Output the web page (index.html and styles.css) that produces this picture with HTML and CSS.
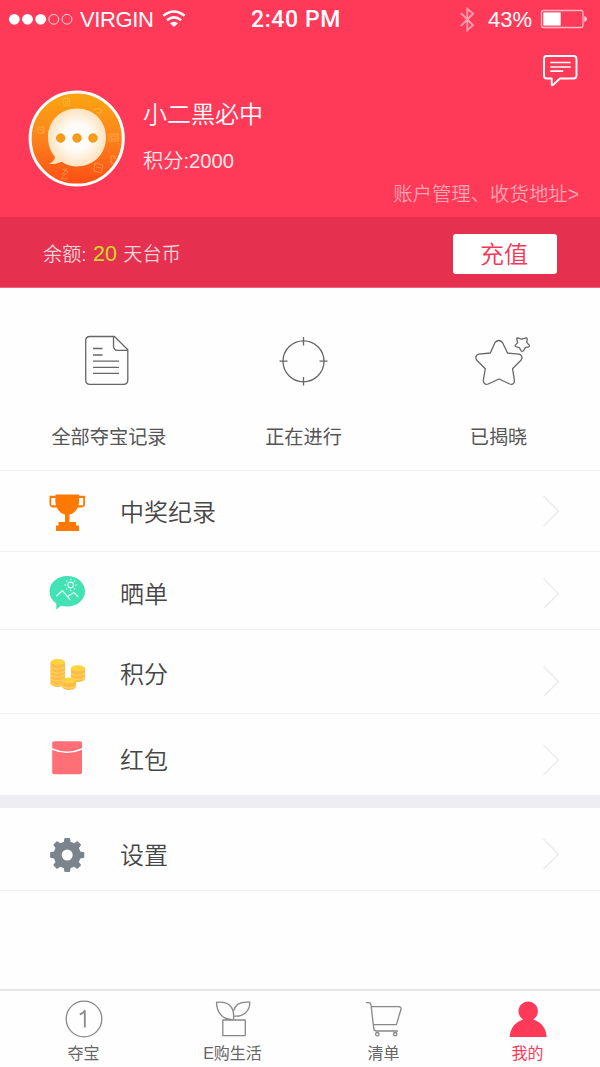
FILE: index.html
```html
<!DOCTYPE html>
<html lang="zh-CN">
<head>
<meta charset="utf-8">
<title>我的</title>
<link rel="stylesheet" href="styles.css">
</head>
<body>
<main class="app">
  <header class="hero">
    <div class="status">
      <svg class="signal" viewBox="0 0 80 40" width="80" height="40">
        <g fill="#fff"><circle cx="14.3" cy="19.3" r="5.4"/><circle cx="27.5" cy="19.3" r="5.4"/><circle cx="40.7" cy="19.3" r="5.4"/></g>
        <g fill="none" stroke="#fff" stroke-opacity=".8"><circle cx="53.8" cy="19.3" r="4.9"/><circle cx="67" cy="19.3" r="4.9"/></g>
      </svg>
      <span class="carrier">VIRGIN</span>
      <svg class="wifi" viewBox="160 0 28 40" width="28" height="40">
        <path d="M170 23.2q4-3 8 0L174 27z" fill="#fff"/>
        <g fill="none" stroke="#fff" stroke-width="2.6"><path d="M167 20.2q7-5.600 14 0"/><path d="M163.400 15.800q10.600-8.600 21.200 0"/></g>
      </svg>
      <span class="time">2:40 PM</span>
      <svg class="bluetooth" viewBox="456 0 20 40" width="20" height="40">
        <path d="M460.800 13l12.300 12.300-5.800 5V8.700l5.800 5L460.800 26" fill="none" stroke="#fff" stroke-opacity=".5" stroke-width="1.900"/>
      </svg>
      <span class="percent">43%</span>
      <svg class="battery" viewBox="538 0 52 40" width="52" height="40">
        <rect x="541.500" y="10.500" width="41.500" height="17" rx="2" fill="none" stroke="#fff" stroke-opacity=".65" stroke-width="1.300"/>
        <rect x="543.300" y="12.400" width="17.400" height="13.200" fill="#fff"/>
        <path d="M584.300 16q2.700.8 2.700 3t-2.700 3z" fill="#fff" fill-opacity=".8"/>
      </svg>
    </div>
    <div class="message-row">
      <svg viewBox="540 50 42 40" width="42" height="40" fill="none" stroke="#fff" stroke-width="1.900" stroke-linejoin="round" stroke-linecap="round">
        <path d="M546.500 56h27q3 0 3 3v16.500q0 3-3 3H560l-7 6.500q-1.300.8-1.300-1V78.500h-5.200q-2.500 0-2.500-3V59q0-3 2.500-3z"/>
        <path d="M551 62.500h19M551 67h19M551 71.200h11.500" stroke-width="1.700"/>
      </svg>
    </div>
    <div class="profile">
      <svg class="avatar" viewBox="28 90 98 98" width="98" height="98">
        <defs>
          <linearGradient id="orange" x1="0" y1="0" x2="0" y2="1"><stop offset="0" stop-color="#fba611"/><stop offset=".5" stop-color="#fd831b"/><stop offset="1" stop-color="#ff4d15"/></linearGradient>
          <radialGradient id="cream"><stop offset="0" stop-color="#fff"/><stop offset=".5" stop-color="#fffaf4"/><stop offset="1" stop-color="#fce3bd"/></radialGradient>
        </defs>
        <circle cx="76.700" cy="138.500" r="46.600" fill="url(#orange)" stroke="#fff" stroke-width="3"/>
        <g fill="none" stroke="#ffd180" stroke-opacity=".4" stroke-width="1">
          <path d="M63 99l6-1 1 7-6 1zM65 101h3M65 103h3M94 111l4-3 4 3-3 4M96 113l4-1M38 127h6v6h-6zM40 129l3 2M109 134h9v7h-9zM111 136h5v3h-5zM117 156h-6v7h4M113 158h3M95 163l8 2-2 8-7-2zM96 167l5 1M63 169l5 3-4 3-3 4h7M62 175l5-7"/>
        </g>
        <path d="M77 108.500c16.500 0 29 12 29 29s-13 29-29 29c-5.700 0-11-1.500-15.500-4.700-3.600 1.800-8 2.600-12.500 2.200 3.200-1.200 5.400-4 6-7-4.400-5-7-12-7-19.500 0-17 12.500-29 29-29z" transform="translate(0 1)" fill="#d65a00" fill-opacity=".3"/>
        <path d="M77 108.500c16.500 0 29 12 29 29s-13 29-29 29c-5.700 0-11-1.500-15.500-4.700-3.600 1.800-8 2.600-12.500 2.200 3.200-1.200 5.400-4 6-7-4.400-5-7-12-7-19.500 0-17 12.500-29 29-29z" fill="url(#cream)"/>
        <g fill="#f99b13" stroke="#e88b11" stroke-width=".7"><circle cx="60.700" cy="138" r="4.300"/><circle cx="77" cy="138" r="4.300"/><circle cx="93" cy="138" r="4.300"/></g>
      </svg>
      <div class="identity">
        <h1 class="name">小二黑必中</h1>
        <p class="points">积分:2000</p>
      </div>
    </div>
    <a class="account">账户管理、收货地址&gt;</a>
  </header>

  <section class="balance">
    <p class="amount">余额: <span class="coins">20</span> 天台币</p>
    <button class="recharge">充值</button>
  </section>

  <section class="records">
    <a class="record">
      <svg viewBox="74 328 70 66" width="70" height="66">
        <path d="M90 336.500h24.500l13.300 13.300V380q0 4.300-4.300 4.300H90q-4.300 0-4.300-4.300v-39.200q0-4.300 4.300-4.300zM113.500 336.500v9.500q0 4.300 4.300 4.300h10M93 348.500h9.500M93 355h9.500M93 361.200h26M93 367.400h26M93 373.400h26"/>
      </svg>
      <span>全部夺宝记录</span>
    </a>
    <a class="record">
      <svg viewBox="269 328 70 66" width="70" height="66">
        <circle cx="303.500" cy="361.300" r="20.500"/><path d="M303.500 337v8.500M303.500 377v8.500M279.500 361.200h8M319.500 361.200h8"/>
      </svg>
      <span>正在进行</span>
    </a>
    <a class="record">
      <svg viewBox="464 328 70 66" width="70" height="66">
        <path d="M495 342.500q3.800-4 7.500 0l5 10.500 11.500 1.200q4.500 1.600 2.200 5.800l-8.700 8.700 2 11.800q-.2 4.800-4.700 3.500L499 379l-10.800 5q-4.500 1.300-4.900-3.500l2-11.800-8.700-8.700q-2.300-4.200 2.200-5.800l11.500-1.200z"/>
        <path d="M517.500 337.800l4.400 1.300 4.200-1.300q1.300.2 1 1.800l-.3 3 2.500 2.500q.6 1.300-1 1.800l-3 .7-1.800 3q-1.300 1.500-2.500 0l-1.700-3-3-.7q-1.600-.5-1-1.800l2.400-2.500-.8-3q-.5-1.700.6-1.800z"/>
      </svg>
      <span>已揭晓</span>
    </a>
  </section>

  <nav class="menu">
    <a class="item prizes">
      <svg class="icon" viewBox="40 471 80 80" width="80" height="80">
        <path d="M55.500 494.500h23.500v1.200h6v9.300q-1 2.600-4.700 2.600h-2.600q-2.500 5.700-8.200 6.900v7.500h6.500v3.500h3v5.500H56v-5.500h2.500V522H65v-7.500q-5.500-1.200-8.200-6.900h-2.600q-3.700 0-4.700-2.600v-9.300h6zM51.300 498v7.300h4.600q-.9-3.400-.4-7.300zM83.200 498h-4.200q.4 3.900-.5 7.300h4.700z" fill="#ff7800" fill-rule="evenodd"/>
      </svg>
      <span class="label">中奖纪录</span>
      <svg class="arrow" viewBox="540 471 60 80" width="60" height="80"><path d="M543.500 496l15 15.200L543.500 526"/></svg>
    </a>
    <a class="item share">
      <svg class="icon" viewBox="40 552 80 77" width="80" height="77">
        <path d="M67.300 576c10 0 17.700 6.800 17.700 15.300S77.300 606.500 67.300 606.500q-4-.1-6.300-.7L56.300 609.500V603.600q-6.800-5-6.800-12.300C49.500 582.800 57.300 576 67.300 576z" fill="#43e2b4"/>
        <g fill="none" stroke="#dffff5" stroke-width="1.200"><circle cx="70.700" cy="585" r="2.800"/><path d="M56.300 596.300l6-5.600 8.200 9.500M67.500 596.500l6.300-3.900 4.500 4.300"/></g>
        <g fill="#dffff5"><circle cx="70.700" cy="579.500" r=".8"/><circle cx="70.700" cy="590.500" r=".8"/><circle cx="65.200" cy="585" r=".8"/><circle cx="76.200" cy="585" r=".8"/><circle cx="66.800" cy="581" r=".8"/><circle cx="74.600" cy="581" r=".8"/><circle cx="66.800" cy="589" r=".8"/><circle cx="74.600" cy="589" r=".8"/></g>
      </svg>
      <span class="label">晒单</span>
      <svg class="arrow" viewBox="540 552 60 77" width="60" height="77"><path d="M543.500 578.500l15 15.200L543.500 608.500"/></svg>
    </a>
    <a class="item score">
      <svg class="icon" viewBox="40 630 80 83" width="80" height="83">
        <g fill="#fdbb4e"><path d="M50.500 662v22q2 3 7 3t7.500-3v-22zM71 669v10q2 3 7 3t7-3v-10zM62 681v6q2 3 7 3t7-3v-6z"/></g>
        <g fill="none" stroke="#ffd04f" stroke-width="1.500"><path d="M50.500 667q7 4 14.500 0M50.500 671q7 4 14.500 0M50.500 675q7 4 14.500 0M50.500 679q7 4 14.500 0M50.500 683q7 4 12 1M71 673.500q7 4 14 0M71 677.500q7 4 14 0M62 686q7 4 14 0"/></g>
        <g fill="#ffd33e"><ellipse cx="57.700" cy="662" rx="7.200" ry="3"/><ellipse cx="78" cy="668.300" rx="7.100" ry="3"/><ellipse cx="69" cy="680.500" rx="7.100" ry="3"/></g>
      </svg>
      <span class="label">积分</span>
      <svg class="arrow" viewBox="540 630 60 83" width="60" height="83"><path d="M543.500 666.500l15 15L543.500 696.500"/></svg>
    </a>
    <a class="item packet">
      <svg class="icon" viewBox="40 714 80 81" width="80" height="81">
        <rect x="52.200" y="741.300" width="29.800" height="33" rx="2" fill="#ff7076"/><path d="M52 749q15 6.500 30 0" fill="none" stroke="#fff" stroke-width="1.600"/>
      </svg>
      <span class="label">红包</span>
      <svg class="arrow" viewBox="540 714 60 81" width="60" height="81"><path d="M543.500 745l15 15L543.500 775"/></svg>
    </a>
    <a class="item settings">
      <svg class="icon" viewBox="40 808 80 82" width="80" height="82">
        <circle cx="67.200" cy="855" r="9.500" fill="none" stroke="#7b838d" stroke-width="8"/>
        <g fill="#7b838d"><path id="tooth" d="M63.500 844l.8-5.300q.2-.8 1-.8h3.800q.8 0 1 .8l.8 5.300z"/><use href="#tooth" transform="rotate(45 67.200 855)"/><use href="#tooth" transform="rotate(90 67.200 855)"/><use href="#tooth" transform="rotate(135 67.200 855)"/><use href="#tooth" transform="rotate(180 67.200 855)"/><use href="#tooth" transform="rotate(225 67.200 855)"/><use href="#tooth" transform="rotate(270 67.200 855)"/><use href="#tooth" transform="rotate(315 67.200 855)"/></g>
      </svg>
      <span class="label">设置</span>
      <svg class="arrow" viewBox="540 808 60 82" width="60" height="82"><path d="M543.500 839l15 15.200L543.500 869"/></svg>
    </a>
  </nav>

  <nav class="tabs">
    <a class="tab">
      <svg viewBox="59 996 50 46" width="50" height="46"><circle cx="84" cy="1019" r="17.800"/><path d="M79.800 1014.300q3-1.200 5-3.500v16.700" stroke-width="1.800"/></svg>
      <span>夺宝</span>
    </a>
    <a class="tab">
      <svg viewBox="208 996 50 46" width="50" height="46"><path d="M222.800 1020h22.500v15.600h-22.500zM233.500 1019.500c-10 .8-17-6.500-17-17.200 10-1.300 18.500 2.500 17 17.200zM234 1016c8.500 1.200 16-4 15.800-13.800-8.500-.7-14.700 1.500-16 8.500"/></svg>
      <span>E购生活</span>
    </a>
    <a class="tab">
      <svg viewBox="359 996 50 46" width="50" height="46"><path d="M366 1002.600h2.500q2.300 0 2.500 2.200l2.800 24q.4 2.200 2.600 2.200H398M371.200 1006.700h27.300q3 0 2.500 2.600l-4.600 15.300h-23"/><circle cx="377.300" cy="1034.200" r="1.700"/><circle cx="395.200" cy="1034.200" r="1.700"/></svg>
      <span>清单</span>
    </a>
    <a class="tab active">
      <svg viewBox="503 996 50 46" width="50" height="46"><path d="M528.200 1001.500a9.700 9.700 0 0 1 5 18q12.800 4.500 13.400 17.500H509.700q.6-13 13.500-17.500a9.700 9.700 0 0 1 5-18z"/></svg>
      <span>我的</span>
    </a>
  </nav>
</main>
</body>
</html>
```
FILE: styles.css
```css
* { box-sizing: border-box; }
body, h1, p { margin: 0; }
body {
  background: #fefefe;
  color: #464646;
  font-family: "Liberation Sans", "Noto Sans CJK SC", sans-serif;
}
svg { display: block; flex: none; }
.app { display: flex; flex-direction: column; width: 600px; height: 1067px; overflow: hidden; }

.hero { height: 217px; background: #ff3958; color: #fff; }
.status { display: flex; height: 40px; line-height: 39px; font-size: 22px; white-space: nowrap; }
.carrier { width: 80px; letter-spacing: -.4px; }
.wifi { margin-right: 63px; }
.time { width: 205px; font-family: Roboto, sans-serif; font-weight: 500; font-size: 23px; letter-spacing: .6px; }
.percent { width: 50px; margin-left: 12px; }

.message-row { display: flex; justify-content: flex-end; height: 50px; padding: 10px 18px 0 0; }
.profile { display: flex; height: 98px; padding-left: 28px; }
.identity { margin-left: 17px; }
.name { font-size: 24px; font-weight: 350; line-height: 36px; margin-top: 7px; }
.points { font-size: 20.200px; font-weight: 350; line-height: 30px; margin-top: 13px; color: #ffe8ec; }
.account { display: block; height: 28px; margin-top: -9px; padding-right: 21px; text-align: right; font-size: 19.400px; font-weight: 350; line-height: 30px; color: #ffa5b2; }

.balance { display: flex; justify-content: space-between; height: 71px; padding: 17px 43px 0; background: #e5314f; border-bottom: 1px solid #f0657c; }
.amount { font-size: 19.200px; font-weight: 350; line-height: 40px; color: #eed5da; }
.coins { font-size: 21.500px; color: #cbdc27; margin: 0 1px; }
.recharge { width: 104px; height: 40px; padding: 0 2px 2px 0; border: 0; border-radius: 3px; background: #fff; color: #f63656; font: 350 24px/38px "Noto Sans CJK SC", sans-serif; }

.records { display: flex; height: 183px; padding: 40px 4px 0 11px; border-bottom: 1px solid #eeeef2; }
.record { display: flex; flex-direction: column; align-items: center; width: 195px; font-size: 19.200px; line-height: 30px; color: #555; }
.record svg { fill: none; stroke: #666; stroke-width: 1.3; stroke-linejoin: round; margin-bottom: 29px; }
.record:first-child span { padding-left: 1px; }

.menu { display: flex; flex-direction: column; }
.item { display: flex; border-bottom: 1px solid #f0f0f1; padding-left: 40px; }
.label { width: 420px; font-size: 24px; font-weight: 350; line-height: 36px; padding-top: 24px; }
.arrow { fill: none; stroke: #ebebf0; stroke-width: 1.5; }
.prizes { height: 81px; }
.share { height: 78px; }
.score { height: 84px; }
.packet { height: 94px; border-bottom: 13px solid #eeedf3; }
.settings { height: 83px; }
.share .label { padding-top: 25px; }
.score .label { padding-top: 27px; }
.packet .label { padding-top: 29px; }
.settings .label { padding-top: 30px; }

.tabs { display: flex; height: 78px; margin-top: auto; padding: 5px 0 0 9px; border-top: 2px solid #e5e5e5; }
.tab { display: flex; flex-direction: column; align-items: center; width: 149px; font-size: 16px; line-height: 24px; color: #666; }
.tab svg { fill: none; stroke: #888; stroke-width: 1.3; stroke-linejoin: round; }
.tab:nth-child(3) { width: 153px; }
.tab:nth-child(4) { width: 135px; }
.tab.active { color: #ff3958; }
.tab.active svg { fill: #ff3958; stroke: none; }
```
